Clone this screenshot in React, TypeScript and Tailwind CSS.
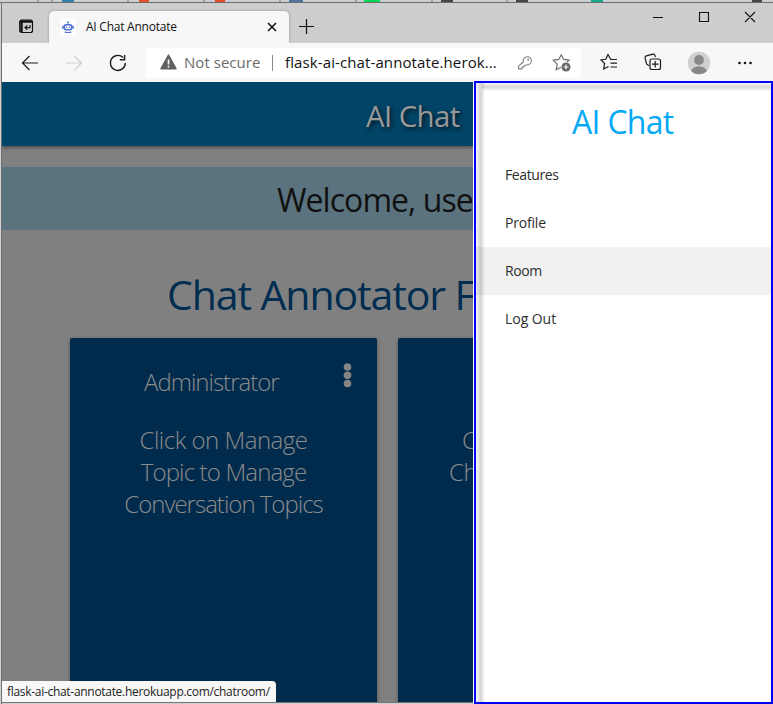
import React from "react";

const line = { fill: "none", stroke: "#1b1b1b", strokeWidth: 1.2 } as const;

function TabBar() {
  return (
    <div className="flex h-[40px] shrink-0 items-end bg-[#cdcdcd] pl-[17px]">
      <svg className="mb-[9px] shrink-0" width="15" height="15" viewBox="0 0 15 15">
        <rect x="0.700" y="1" width="12.800" height="12.500" rx="2" fill="none" stroke="#111" strokeWidth="1.2" />
        <path d="M1 2.500h12M2.500 3v10" stroke="#111" strokeWidth="2.4" />
        <path d="M11 6v2.600H6.200M8.200 6.400L6 8.600l2.200 2.200" fill="none" stroke="#111" strokeWidth="1.1" />
      </svg>
      <div className="ml-[15px] flex h-[32px] w-[240px] shrink-0 items-center rounded-t-[5px] bg-[#f7f7f7] pl-[11px] shadow-[0_0_3px_rgba(0,0,0,0.3)] [clip-path:inset(-3px_-3px_0_-3px)]">
        <div className="flex size-[16px] shrink-0 items-center justify-center bg-white">
          <svg width="14" height="14" viewBox="0 0 14 14">
            <circle cx="7" cy="2.500" r="1" fill="#3f63cf" />
            <rect x="3" y="4.800" width="8" height="5" rx="2.500" fill="#fff" stroke="#4a6cd4" strokeWidth="1.6" />
            <path d="M1.700 6v2.500M12.300 6v2.500M3.500 12q3.500 1 7 0" fill="none" stroke="#4a6cd4" strokeWidth="1.200" />
            <circle cx="5.500" cy="7.200" r=".8" fill="#3f63cf" />
            <circle cx="8.500" cy="7.200" r=".8" fill="#3f63cf" />
          </svg>
        </div>
        <span className="ml-[10px] w-[181px] shrink-0 text-[12px] leading-[16px] tracking-[-0.24px] text-[#111]">AI Chat Annotate</span>
        <svg className="shrink-0" width="10" height="10" viewBox="0 0 10 10">
          <path d="M1 1l8 8M9 1L1 9" stroke="#111" strokeWidth="1.5" />
        </svg>
      </div>
      <svg className="mb-[9px] ml-[10px] shrink-0" width="15" height="15" viewBox="0 0 15 15">
        <path d="M7.500 0v15M0 7.500h15" stroke="#111" strokeWidth="1.2" />
      </svg>
      <svg className="mb-[20px] ml-[339px] shrink-0" width="104" height="12" viewBox="0 0 104 12">
        <path d="M0 6.500h10M46.500 1.500h9v9h-9zM92 1l10 10M102 1l-10 10" fill="none" stroke="#111" strokeWidth="1.1" />
      </svg>
    </div>
  );
}

function Toolbar() {
  return (
    <div className="flex h-[39px] shrink-0 items-center bg-[#f7f7f7] pl-[19px]">
      <svg className="shrink-0" width="106" height="18" viewBox="0 0 106 18">
        <path d="M17 9H1.500M8.500 2L1.500 9l7 7" {...line} />
        <path d="M45 9h15.500M53.500 2l7 7-7 7" {...line} stroke="#cfcfcf" />
        <path d="M104.300 9a7.500 7.500 0 1 1-2.200-5.400M103.600 1v4.800h-4.800" {...line} strokeWidth="1.4" />
      </svg>
      <div className="ml-[19px] flex h-[30px] w-[435px] shrink-0 items-center rounded-[4px] bg-white pl-[14px]">
        <svg className="-mt-px shrink-0" width="17" height="16" viewBox="0 0 17 16">
          <path d="M8.500 1.200L16 14.800H1z" fill="#616161" stroke="#616161" strokeWidth="1.500" strokeLinejoin="round" />
          <path d="M8.500 5.500v5M8.500 11.800v1.700" stroke="#fff" strokeWidth="1.600" />
        </svg>
        <span className="-mt-px ml-[7px] w-[79px] shrink-0 whitespace-nowrap text-[15px] leading-[20px] tracking-[0.04px] text-[#6b6b6b]">Not secure</span>
        <span className="ml-[9px] h-[16px] w-px shrink-0 bg-[#8a8a8a]" />
        <span className="-mt-px ml-[12px] w-[231px] shrink-0 whitespace-nowrap text-[15px] leading-[20px] tracking-[0.11px] text-[#111]">flask-ai-chat-annotate.herok...</span>
        <svg className="shrink-0" width="55" height="20" viewBox="0 0 55 20">
          <path d="M7.300 8.700a4.100 4.100 0 1 1 3 3.100l-1.200 1H7.800v1.500H6v1.600H2.500v-2.600z" fill="none" stroke="#858585" strokeWidth="1.100" />
          <circle cx="12.200" cy="6.800" r="1" fill="#858585" />
          <g transform="translate(1.500 0)">
            <path d="M43.500 14.200l-4.800 2.600 1-5.600-4-4 5.500-.8L43.700 1.800l2.500 4.600 5.500.8-2.200 2" fill="none" stroke="#666" strokeWidth="1.100" />
            <circle cx="48.500" cy="14" r="4.500" fill="#666" />
            <path d="M48.500 11.500v5M46 14h5" stroke="#fff" strokeWidth="1.100" />
          </g>
        </svg>
      </div>
      <svg className="ml-[19px] shrink-0" width="154" height="24" viewBox="0 0 154 24">
        <path d="M12 8.300L10.500 8 8 3.500 5.800 8.300 1 9l3.600 3.500-.9 5.500 4.800-2.500M10.500 8.500h6.500M10.500 12.200h6.500M10.500 16h6.500" {...line} />
        <path d="M49.500 14.500l-1.400-.4q-1.400-.5-1.800-2l-1.200-5q-.4-1.700 1.200-2.200l6.500-1.700q1.700-.4 2.200 1.200l.3 1.800" {...line} />
        <rect x="50" y="8" width="10.500" height="10.500" rx="2" {...line} />
        <path d="M55.200 10v6.500M52 13.200h6.500" {...line} />
        <clipPath id="avatar"><circle cx="99" cy="12" r="11.200" /></clipPath>
        <g clipPath="url(#avatar)">
          <path d="M87 0h24v24H87z" fill="#d2d0ce" />
          <circle cx="99" cy="9" r="4.900" fill="#8a8886" />
          <ellipse cx="99" cy="21" rx="8" ry="5.700" fill="#8a8886" />
        </g>
        <g fill="#111"><circle cx="139.500" cy="12" r="1.300" /><circle cx="145" cy="12" r="1.300" /><circle cx="150.500" cy="12" r="1.300" /></g>
      </svg>
    </div>
  );
}

function MainPage() {
  return (
    <main className="relative h-[620px] w-[471px] shrink-0 overflow-hidden bg-[#808080]">
      <header className="h-[64px] bg-[#004467] pl-[364px] pt-[14px] text-[29.4px] leading-[40px] tracking-[-0.6px] text-[#999] shadow-[0_2px_3px_rgba(0,0,0,0.35)]">
        <span className="whitespace-nowrap [text-shadow:2px_2px_4px_rgba(0,0,0,0.7)]">AI Chat</span>
      </header>
      <div className="mt-[21px] h-[63px] whitespace-nowrap bg-[#5b737f] pl-[275px] pt-[11px] text-[32px] leading-[44px] tracking-[-0.95px] text-[#111]">Welcome, use</div>
      <h1 className="mt-[36px] h-[72px] whitespace-nowrap pl-[165px] text-[41px] leading-[56px] tracking-[-1.1px] text-[#002d50]">Chat Annotator F</h1>
      <div className="flex gap-[21px] pl-[68px] font-light text-[24px] leading-[32px] text-[#8c8c8c]">
        <section className="flex h-[400px] w-[307px] shrink-0 flex-col rounded-[2px] bg-[#002b4c] pt-[25px] shadow-[0_1px_4px_rgba(0,0,0,0.35)]">
          <div className="flex h-[61px]">
            <h2 className="w-[273px] whitespace-nowrap pl-[74px] pt-[3px] tracking-[-1px]">Administrator</h2>
            <svg width="9" height="25" viewBox="0 0 9 25">
              <g fill="#858585"><circle cx="4.500" cy="4" r="3.800" /><circle cx="4.500" cy="12.300" r="3.800" /><circle cx="4.500" cy="20.500" r="3.800" /></g>
            </svg>
          </div>
          <p className="text-center tracking-[-0.5px]">Click on Manage</p>
          <p className="text-center tracking-[-0.85px]">Topic to Manage</p>
          <p className="text-center tracking-[-1px]">Conversation Topics</p>
        </section>
        <section className="h-[400px] w-[307px] shrink-0 rounded-[2px] bg-[#002b4c] pt-[86px] shadow-[0_1px_4px_rgba(0,0,0,0.35)]">
          <p className="pl-[64px]">C</p>
          <p className="pl-[51px] tracking-[-0.45px]">Ch</p>
        </section>
      </div>
      <div className="absolute bottom-0 left-0 h-[21px] w-[274px] whitespace-nowrap rounded-tr-[4px] bg-[#f7f7f7] pl-[5px] pt-[2px] text-[12px] leading-[17px] tracking-[-0.3px] text-[#222]">flask-ai-chat-annotate.herokuapp.com/chatroom/</div>
    </main>
  );
}

function SideNav() {
  return (
    <aside className="relative h-[623px] w-[299px] shrink-0 border-2 border-[#0000fe] bg-white">
      <h2 className="pl-[96px] pt-[17px] text-[32px] leading-[44px] tracking-[-0.7px] text-[#03a9f4]">AI Chat</h2>
      <nav className="mt-[7px] text-[14px] font-medium leading-[48px] tracking-[-0.4px] text-[#2d2d2d]">
        <div className="h-[48px] pl-[29px]">Features</div>
        <div className="h-[48px] pl-[29px] tracking-[-0.2px]">Profile</div>
        <div className="h-[48px] bg-[#f1f1f1] pl-[29px]">Room</div>
        <div className="h-[48px] pl-[29px] tracking-[-0.05px]">Log Out</div>
      </nav>
      {/* Soft outer edge of the drawer */}
      <div className="absolute bottom-0 left-0 top-0 w-[9px] bg-[linear-gradient(90deg,rgba(0,0,0,.04),rgba(0,0,0,.16)_50%,rgba(0,0,0,.13)_65%,transparent)]" />
      <div className="absolute left-[6px] right-0 top-0 h-[8px] bg-[linear-gradient(180deg,rgba(0,0,0,.04),rgba(0,0,0,.16)_50%,rgba(0,0,0,.1)_70%,transparent)]" />
    </aside>
  );
}

export default function App() {
  return (
    <div className="flex h-[704px] w-[773px] flex-col overflow-hidden bg-[#c9cfd2] font-['Open_Sans','Noto_Sans',sans-serif]">
      <div className="h-[2px] shrink-0 bg-[#c9cfd2]">
        <svg className="block" width="773" height="2">
          <path d="M38 0v2M52 0v2M128 0v2M204 0v2M280 0v2M356 0v2M432 0v2M507 0v2" stroke="#777" />
          <path d="M62 0h12v2H62z" fill="#3580aa" /><path d="M139 0h10v2h-10zM215 0h10v2h-10z" fill="#e44d26" />
          <path d="M289 0h14v2h-14z" fill="#4d729f" /><path d="M364 0h16v2h-16z" fill="#00d455" />
          <path d="M441 0h12v2h-12zM516 0h12v2h-12zM752 0h10v2h-10z" fill="#444" /><path d="M591 0h12v2h-12z" fill="#14a98b" />
        </svg>
      </div>
      <div className="h-px shrink-0 bg-[#6e6e6e]" />
      <div className="flex min-h-0 grow">
        <div className="w-px shrink-0 bg-[#d0d0d0]" />
        <div className="w-px shrink-0 bg-[#6e7375]" />
        <div className="flex grow flex-col">
          <TabBar />
          <Toolbar />
          <div className="flex h-[622px] shrink-0">
            <div className="h-[620px] w-[471px]"><MainPage /><div className="h-px bg-[#777]" /></div>
            <div className="w-px shrink-0 bg-white" />
            <div className="-mt-px"><SideNav /></div>
          </div>
        </div>
      </div>
    </div>
  );
}
